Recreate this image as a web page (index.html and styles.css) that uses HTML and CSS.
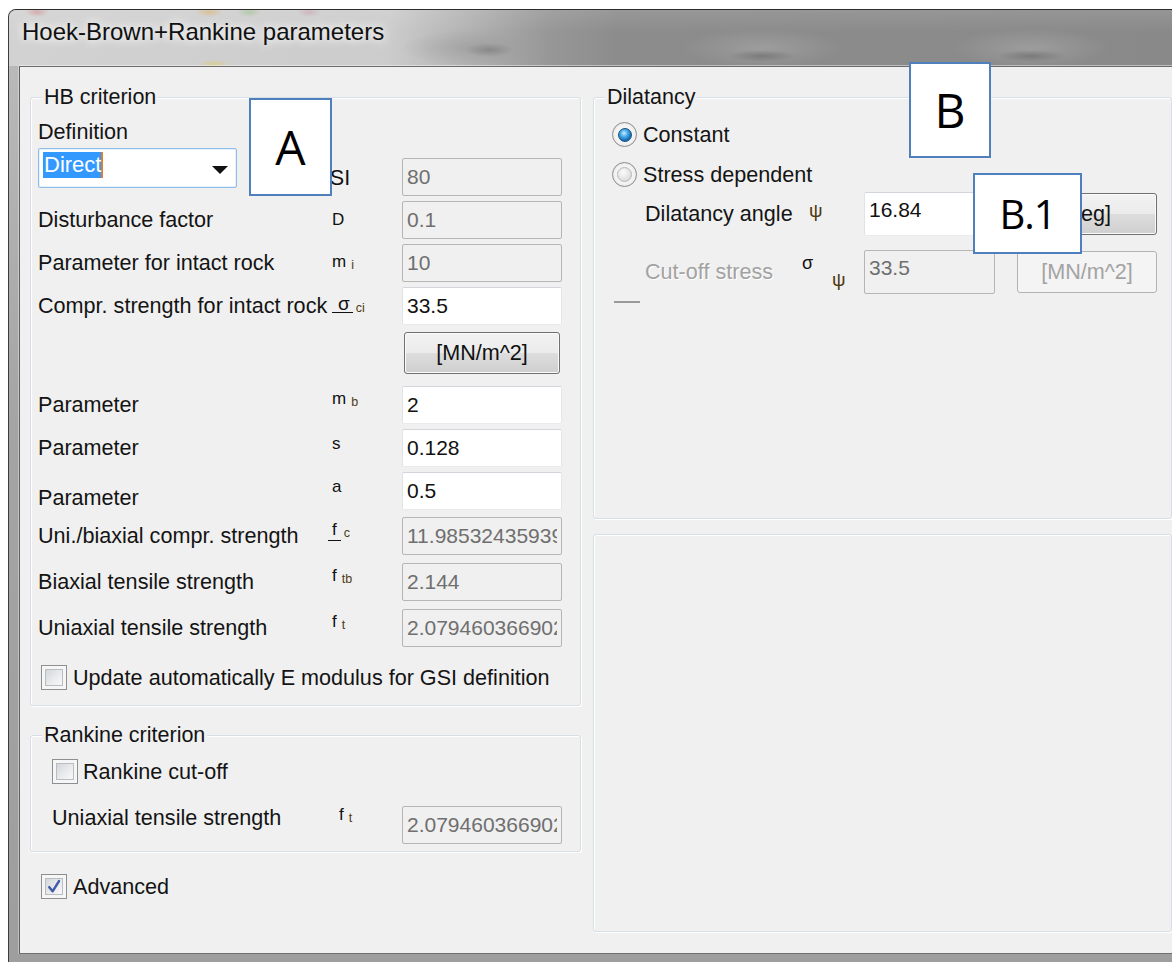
FILE: index.html
```html
<!DOCTYPE html>
<html lang="en">
<head>
<meta charset="utf-8">
<title>Hoek-Brown+Rankine parameters</title>
<link rel="stylesheet" href="styles.css">
</head>
<body>
<div class="window">
  <div class="titlebar"><span class="title">Hoek-Brown+Rankine parameters</span></div>
  <div class="frame">
    <div class="client">

      <div class="col-left">
        <fieldset class="group hb">
          <legend>HB criterion</legend>
          <div class="field-label">Definition</div>
          <div class="row row-def">
            <div class="combo"><span class="sel">Direct</span><span class="arrow"></span></div>
            <span class="sym sym-gsi">GSI</span>
            <input class="tb tb-def" disabled value="80">
          </div>
          <div class="row r-d">
            <span class="lbl">Disturbance factor</span>
            <span class="sym">D</span>
            <input class="tb" disabled value="0.1">
          </div>
          <div class="row r-mi">
            <span class="lbl">Parameter for intact rock</span>
            <span class="sym">m<sub>i</sub></span>
            <input class="tb" disabled value="10">
          </div>
          <div class="row r-sci">
            <span class="lbl">Compr. strength for intact rock</span>
            <span class="sym"><span class="bar">σ</span><sub>ci</sub></span>
            <input class="tb" value="33.5">
          </div>
          <div class="row r-unit">
            <span></span><span></span>
            <button class="btn">[MN/m^2]</button>
          </div>
          <div class="row r-mb">
            <span class="lbl">Parameter</span>
            <span class="sym up">m<sub>b</sub></span>
            <input class="tb" value="2">
          </div>
          <div class="row r-s">
            <span class="lbl">Parameter</span>
            <span class="sym up">s</span>
            <input class="tb" value="0.128">
          </div>
          <div class="row r-a">
            <span class="lbl lbl-low">Parameter</span>
            <span class="sym up">a</span>
            <input class="tb" value="0.5">
          </div>
          <div class="row r-fc">
            <span class="lbl">Uni./biaxial compr. strength</span>
            <span class="sym up"><span class="bar bar-f">f</span><sub>c</sub></span>
            <input class="tb" disabled value="11.985324359393">
          </div>
          <div class="row r-ftb">
            <span class="lbl">Biaxial tensile strength</span>
            <span class="sym up">f<sub>tb</sub></span>
            <input class="tb" disabled value="2.144">
          </div>
          <div class="row r-ft">
            <span class="lbl">Uniaxial tensile strength</span>
            <span class="sym up">f<sub>t</sub></span>
            <input class="tb" disabled value="2.079460366902">
          </div>
          <label class="check check-update">
            <span class="chk"><span class="chk-in"></span></span>
            <span>Update automatically E modulus for GSI definition</span>
          </label>
        </fieldset>

        <fieldset class="group rankine">
          <legend>Rankine criterion</legend>
          <label class="check check-rankine">
            <span class="chk"><span class="chk-in"></span></span>
            <span>Rankine cut-off</span>
          </label>
          <div class="row row-rk">
            <span class="lbl lbl-high">Uniaxial tensile strength</span>
            <span class="sym up-more">f<sub>t</sub></span>
            <input class="tb" disabled value="2.079460366902">
          </div>
        </fieldset>

        <label class="check check-adv">
          <span class="chk"><span class="chk-in"><svg width="17" height="17" viewBox="0 0 17 17"><path d="M3.5 9.2 L7 13.6 L13.8 2.8" fill="none" stroke="#3f5ca8" stroke-width="2.6" stroke-linecap="round" stroke-linejoin="round"/></svg></span></span>
          <span>Advanced</span>
        </label>
      </div>

      <div class="col-right">
        <fieldset class="group dil">
          <legend>Dilatancy</legend>
          <label class="opt opt-const">
            <span class="radio on"><span class="dot"></span></span>
            <span>Constant</span>
          </label>
          <label class="opt opt-stress">
            <span class="radio"><span class="dot"></span></span>
            <span>Stress dependent</span>
          </label>
          <div class="rrow rrow-angle">
            <span class="lbl">Dilatancy angle</span>
            <span class="rsym"><span class="psi">ψ</span></span>
            <input class="tb tb-tall" value="16.84">
            <button class="btn">[deg]</button>
          </div>
          <div class="rrow rrow-cut">
            <span class="lbl off">Cut-off stress</span>
            <span class="rsym rsym-cut"><span class="sig">σ</span><span class="psi psi-sub">ψ</span></span>
            <input class="tb tb-tall" disabled value="33.5">
            <button class="btn btn-off" disabled>[MN/m^2]</button>
          </div>
          <div class="peek"></div>
        </fieldset>
        <div class="group2"></div>
      </div>

    </div>
  </div>
</div>

<div class="callout callout-a">A</div>
<div class="callout callout-b">B</div>
<div class="callout callout-b1">B.1</div>
</body>
</html>
```

FILE: styles.css
```css
html, body {
  margin: 0;
  padding: 0;
  background: #ffffff;
  overflow: hidden;
}

body {
  width: 1172px;
  height: 962px;
  font-family: "Liberation Sans", Arial, sans-serif;
  font-size: 21.6px;
  color: #141414;
}

/* ---------- window chrome ---------- */
.window {
  margin: 9px 0 0 8px;
  width: 1200px;
  border-top: 1px solid #2c2c2c;
  border-left: 1px solid #3c3c3c;
  border-top-left-radius: 8px;
  overflow: hidden;
  background: #a7a7a7;
}

.titlebar {
  height: 56px;
  box-sizing: border-box;
  padding: 7px 0 0 13px;
  background:
    radial-gradient(ellipse 34px 6px at 753px 46px, rgba(100, 100, 100, 0.55), rgba(100, 100, 100, 0)),
    radial-gradient(ellipse 34px 6px at 1022px 46px, rgba(100, 100, 100, 0.55), rgba(100, 100, 100, 0)),
    radial-gradient(ellipse 80px 20px at 753px 38px, rgba(160, 160, 160, 0.85), rgba(160, 160, 160, 0)),
    radial-gradient(ellipse 80px 20px at 1022px 38px, rgba(160, 160, 160, 0.85), rgba(160, 160, 160, 0)),
    radial-gradient(ellipse 24px 7px at 480px 40px, rgba(105, 105, 105, 0.45), rgba(105, 105, 105, 0)),
    radial-gradient(ellipse 70px 18px at 462px 38px, rgba(150, 150, 150, 0.55), rgba(150, 150, 150, 0)),
    radial-gradient(ellipse 12px 5px at 28px 2px, rgba(210, 95, 95, 0.35), rgba(210, 95, 95, 0)),
    radial-gradient(ellipse 14px 5px at 200px 2px, rgba(225, 165, 60, 0.4), rgba(225, 165, 60, 0)),
    radial-gradient(ellipse 12px 5px at 240px 2px, rgba(120, 185, 95, 0.35), rgba(120, 185, 95, 0)),
    radial-gradient(ellipse 12px 5px at 300px 2px, rgba(200, 120, 150, 0.3), rgba(200, 120, 150, 0)),
    radial-gradient(ellipse 16px 4px at 205px 54px, rgba(230, 200, 80, 0.45), rgba(230, 200, 80, 0)),
    linear-gradient(to bottom, rgba(255, 255, 255, 0.1), rgba(255, 255, 255, 0) 40%),
    linear-gradient(to right, #d2d2d2 0, #cccccc 380px, #b2b2b2 460px, #979797 540px, #8c8c8c 610px, #898989 100%);
}

.title {
  font-size: 24px;
  line-height: 30px;
  color: #101010;
  text-shadow: 0 0 8px #ffffff, 0 0 14px rgba(255, 255, 255, 0.85);
}

.frame {
  display: flex;
  padding: 0 0 8px 10px;
  background: linear-gradient(to bottom, #b9b9b9, #a4a4a4 40%, #9e9e9e);
}

.client {
  flex: 1;
  display: flex;
  align-items: flex-start;
  height: 886px;
  background: #f0f0f0;
  border-top: 1px solid #6b6b6b;
  border-left: 1px solid #5e5e5e;
  border-bottom: 1px solid #707070;
  box-shadow: 0 -1px 0 rgba(255, 255, 255, 0.45), -1px 0 0 rgba(255, 255, 255, 0.35);
}

/* ---------- group boxes ---------- */
.group {
  margin: 0;
  min-width: 0;
  border: 1px solid #d5dfe5;
  border-radius: 3px;
  box-shadow: inset 1px 1px 0 #ffffff, 1px 1px 0 #ffffff;
}

.group legend {
  padding: 0 2px;
  font-size: 21.5px;
  line-height: 24px;
  background: #f0f0f0;
}

.col-left {
  width: 551px;
  margin-left: 10px;
  padding-top: 18px;
}

.col-right {
  width: 579px;
  margin-left: 12px;
  padding-top: 18px;
}

.hb {
  padding: 11px 17px 15px 7px;
}

.hb legend {
  margin-left: 4px;
}

.rankine {
  margin-top: 17px;
  padding: 12px 17px 7px 21px;
}

.rankine legend {
  margin-left: -10px;
}

.dil {
  box-sizing: border-box;
  height: 434px;
  padding: 13px 10px 0 18px;
}

.dil legend {
  margin-left: -7px;
}

.group2 {
  margin-top: 15px;
  height: 398px;
  box-sizing: border-box;
  border: 1px solid #d5dfe5;
  border-radius: 3px;
  box-shadow: inset 1px 1px 0 #ffffff, 1px 1px 0 #ffffff;
}

/* ---------- rows ---------- */
.field-label {
  line-height: 24px;
}

.row {
  display: grid;
  grid-template-columns: 292px 72px 160px;
  align-items: center;
}

.lbl {
  line-height: 24px;
  white-space: nowrap;
}

.lbl-low {
  align-self: end;
}

.lbl-high {
  margin-bottom: 14px;
}

.row-def {
  margin-top: 4px;
  align-items: start;
}

.r-d { margin-top: 5px; }
.r-mi { margin-top: 5px; }
.r-sci { margin-top: 5px; }
.r-unit { margin-top: 7px; }
.r-mb { margin-top: 12px; }
.r-s { margin-top: 5px; }
.r-a { margin-top: 5px; }
.r-fc { margin-top: 7px; }
.r-ftb { margin-top: 8px; }
.r-ft { margin-top: 8px; }

.row-rk {
  margin-top: 21px;
  grid-template-columns: 285px 65px 160px;
}

/* ---------- symbols ---------- */
.sym {
  padding-left: 2px;
  font-size: 17px;
  line-height: 20px;
  color: #111111;
  white-space: nowrap;
}

.sym sub {
  font-size: 12.5px;
  vertical-align: -2px;
  margin-left: 5px;
  color: #4d3a14;
}

.sym.up {
  margin-bottom: 9px;
}

.sym.up-more {
  margin-bottom: 16px;
  padding-left: 2px;
}

.sym-gsi {
  margin: 18px 0 0 -17px;
  padding: 0;
  font-size: 21.6px;
  line-height: 24px;
}

.bar {
  display: inline-block;
  border-bottom: 1px solid #111111;
  padding: 0 3px 1px 6px;
  font-size: 19px;
  line-height: 14px;
}

.bar-f {
  font-size: 17px;
  padding: 0 4px 2px 4px;
  margin-left: -4px;
  line-height: 16px;
}

.bar + sub {
  margin-left: 3px;
}

/* ---------- controls ---------- */
.combo {
  box-sizing: border-box;
  width: 199px;
  height: 40px;
  display: flex;
  align-items: flex-start;
  padding: 3px 0 0 4px;
  background: #ffffff;
  border: 1px solid #8fbde9;
  border-radius: 2px;
  box-shadow: inset 0 0 0 1px #e6f1fb;
}

.sel {
  background: #3399ff;
  color: #ffffff;
  font-size: 22px;
  line-height: 26px;
  padding: 0 0 0 1px;
  border-right: 2px solid #d9822b;
}

.arrow {
  margin: 14px 8px 0 auto;
  width: 0;
  height: 0;
  border-left: 8px solid transparent;
  border-right: 8px solid transparent;
  border-top: 8px solid #111111;
}

.tb {
  box-sizing: border-box;
  width: 160px;
  height: 38px;
  margin: 0;
  padding: 0 4px;
  font-family: "Liberation Sans", Arial, sans-serif;
  font-size: 21px;
  color: #111111;
  background: #ffffff;
  border: 1px solid;
  border-color: #d2d6da #e4e7ea #e8eaed #e0e3e6;
  border-radius: 2px;
  outline: none;
}

.tb:disabled {
  color: #6f6f6f;
  background: #f0f0f0;
  border-color: #b5b5b5;
}

.tb-def {
  margin-top: 10px;
}

.btn {
  box-sizing: border-box;
  width: 156px;
  height: 42px;
  margin: 0 0 0 2px;
  padding: 0;
  font-family: "Liberation Sans", Arial, sans-serif;
  font-size: 21.6px;
  color: #111111;
  border: 1px solid #707070;
  border-radius: 3px;
  background: linear-gradient(to bottom, #f2f2f2 0%, #ebebeb 50%, #dddddd 51%, #cfcfcf 100%);
  box-shadow: inset 0 0 0 1px #fbfbfb;
}

/* ---------- checkboxes ---------- */
.check {
  display: flex;
  align-items: center;
  gap: 6px;
  line-height: 24px;
  white-space: nowrap;
}

.chk {
  box-sizing: border-box;
  width: 26px;
  height: 25px;
  padding: 3px;
  border: 1px solid #8e8f8f;
  background: #f6f6f6;
}

.chk-in {
  box-sizing: border-box;
  display: flex;
  align-items: center;
  justify-content: center;
  width: 100%;
  height: 100%;
  border: 1px solid #b9bcc1;
  background: linear-gradient(135deg, #d4d7db 0%, #e9ebed 55%, #f8f8f8 100%);
}

.check-update {
  margin: 18px 0 0 3px;
}

.check-rankine {
  gap: 5px;
}

.check-adv {
  margin: 22px 0 0 11px;
}

/* ---------- dilatancy ---------- */
.opt {
  display: flex;
  align-items: center;
  gap: 6px;
  line-height: 24px;
}

.opt-stress {
  margin-top: 15px;
}

.radio {
  box-sizing: border-box;
  width: 25px;
  height: 25px;
  border-radius: 50%;
  border: 1px solid #8c8c8c;
  background: radial-gradient(circle at 50% 50%, #f4f4f4 55%, #d6d6d6 100%);
  display: flex;
  align-items: center;
  justify-content: center;
}

.dot {
  box-sizing: border-box;
  width: 15px;
  height: 15px;
  border-radius: 50%;
  border: 1px solid #b8b8b8;
  background: radial-gradient(circle at 40% 35%, #fbfbfb 0%, #e2e2e2 60%, #cfcfcf 100%);
}

.radio.on .dot {
  width: 14px;
  height: 14px;
  border-color: #1d4f7e;
  background: radial-gradient(circle at 42% 35%, #c9ecff 0%, #55b4ec 30%, #1a78c2 62%, #0b4a82 100%);
}

.rrow {
  display: grid;
  grid-template-columns: 164px 55px 131px 162px;
  align-items: center;
  margin-left: 33px;
}

.rrow-angle {
  margin-top: 5px;
}

.rrow-cut {
  margin-top: 14px;
}

.tb-tall {
  width: 131px;
  height: 44px;
  padding-bottom: 8px;
}

.rrow .btn {
  width: 140px;
  margin-left: 22px;
}

.btn-off {
  color: #a3a3a3;
  background: #f4f4f4;
  border-color: #b0b4b7;
  box-shadow: none;
}

.lbl.off {
  color: #a2a2a2;
  text-shadow: 1px 1px 0 #ffffff;
}

.rsym {
  font-size: 19px;
  line-height: 20px;
  color: #4d3a14;
  margin-bottom: 6px;
}

.rsym-cut {
  display: flex;
  align-items: flex-start;
  height: 44px;
  margin: 0 0 0 -7px;
  color: #111111;
}

.sig {
  margin-top: 3px;
  font-size: 18px;
}

.psi-sub {
  margin: 20px 0 0 19px;
  color: #4d3a14;
}

.peek {
  width: 26px;
  height: 0;
  margin: 7px 0 0 2px;
  border-top: 2px solid #9a9a9a;
}

/* ---------- annotation labels ---------- */
.callout {
  position: absolute;
  box-sizing: border-box;
  display: flex;
  align-items: center;
  justify-content: center;
  background: #ffffff;
  border: 2px solid #4f7fbd;
  font-family: "Open Sans", "Liberation Sans", sans-serif;
  color: #000000;
  line-height: 1;
}

.callout-a {
  left: 249px;
  top: 98px;
  width: 83px;
  height: 98px;
  font-size: 48px;
}

.callout-b {
  left: 909px;
  top: 62px;
  width: 82px;
  height: 96px;
  font-size: 48px;
}

.callout-b1 {
  left: 973px;
  top: 173px;
  width: 109px;
  height: 81px;
  font-size: 40px;
  letter-spacing: -1px;
}
```
